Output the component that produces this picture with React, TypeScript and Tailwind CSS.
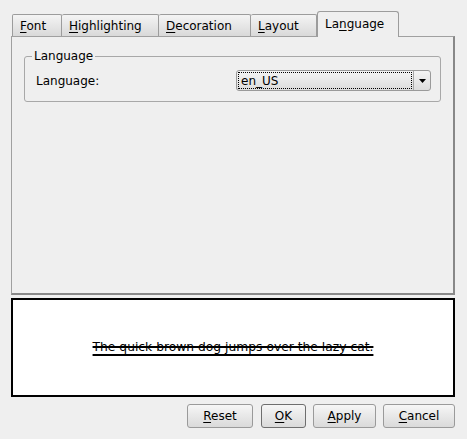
import React from 'react';

const FONT = "font-['DejaVu_Sans','Liberation_Sans',sans-serif]";

const tabs = [
  { pre: '', key: 'F', post: 'ont', w: 'w-[50px]' },
  { pre: '', key: 'H', post: 'ighlighting', w: 'w-[97px]' },
  { pre: '', key: 'D', post: 'ecoration', w: 'w-[92px]' },
  { pre: '', key: 'L', post: 'ayout', w: 'w-[66px]' },
];

const Mn = ({ pre, k, post }: { pre: string; k: string; post: string }) => (
  <span>
    {pre}
    <span className="underline underline-offset-2">{k}</span>
    {post}
  </span>
);

const Btn = ({ k, post, w, def }: { k: string; post: string; w: string; def?: boolean }) => (
  <button
    className={`${w} h-[24px] rounded-[3px] border ${def ? 'border-[#6e6e6e]' : 'border-[#9a9a9a]'} bg-gradient-to-b from-[#f6f6f6] to-[#dadada] text-[12px] text-black flex items-center justify-center`}
  >
    <Mn pre="" k={k} post={post} />
  </button>
);

export default function App() {
  return (
    <div className={`w-[467px] h-[439px] bg-[#efefef] pt-[11px] pl-[11px] pr-[12px] flex flex-col ${FONT} text-[12px] text-black`}>
      {/* tab bar */}
      <div className="flex items-end h-[25px] pl-[1px] relative z-10">
        {tabs.map((t, i) => (
          <div
            key={i}
            className={`${t.w} h-[22px] border border-b-0 border-[#9c9c9c] ${i > 0 ? 'border-l-0' : ''} rounded-t-[2px] bg-gradient-to-b from-[#f4f4f4] to-[#d9d9d9] flex items-center pl-[7px]`}
          >
            <Mn pre={t.pre} k={t.key} post={t.post} />
          </div>
        ))}
        <div className="w-[82px] h-[26px] -mb-[1px] border border-b-0 border-[#9c9c9c] rounded-t-[3px] bg-[#efefef] flex items-start pt-[3px] pl-[7px]">
          <Mn pre="La" k="n" post="guage" />
        </div>
      </div>

      {/* panel */}
      <div className="h-[259px] border border-[#a0a0a0] border-r-[#888888] border-b-[#888888] border-r-2 border-b-2 pt-[12px] pl-[12px] pr-[12px]">
        <fieldset className="border border-[#a8a8a8] rounded-[3px] pl-[11px] pr-[9px] pb-[10px]">
          <legend className="-ml-[4px] px-[2px] leading-[14px]">Language</legend>
          <div className="flex items-center pt-[7px]">
            <div className="flex-1">Language:</div>
            <div className="w-[195px] h-[21px] rounded-[3px] border border-[#9a9a9a] bg-gradient-to-b from-[#f4f4f4] to-[#dcdcdc] flex items-stretch">
              <div className="flex-1 p-[1px]">
                <div className="h-full border border-dotted border-black flex items-center pl-[2px] leading-none">
                  en_US
                </div>
              </div>
              <div className="w-[17px] border-l border-[#a8a8a8] flex items-center justify-center">
                <svg width="7" height="4" viewBox="0 0 7 4">
                  <polygon points="0,0 7,0 3.5,4" fill="#000" />
                </svg>
              </div>
            </div>
          </div>
        </fieldset>
      </div>

      {/* preview */}
      <div className="mt-[3px] h-[99px] border-2 border-black bg-white flex items-center justify-center">
        <span className="[text-decoration-line:underline_line-through] decoration-2 underline-offset-[3px] text-[12.3px]">
          The quick brown dog jumps over the lazy cat.
        </span>
      </div>

      {/* buttons */}
      <div className="mt-[7px] flex justify-end gap-[7px]">
        <Btn k="R" post="eset" w="w-[66px] mr-[1px]" />
        <Btn k="O" post="K" w="w-[45px]" def />
        <Btn k="A" post="pply" w="w-[63px]" />
        <Btn k="C" post="ancel" w="w-[72px]" />
      </div>
    </div>
  );
}
